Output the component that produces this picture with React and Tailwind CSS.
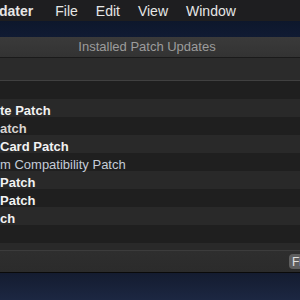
export default function App() {
  const rows = [
    { text: '', cls: '' },
    { text: 'te Patch', cls: 'font-bold text-[#f2f2f2]' },
    { text: 'atch', cls: 'font-bold text-[#d8d4d0]' },
    { text: 'Card Patch', cls: 'font-bold text-[#f2f2f2]' },
    { text: 'm Compatibility Patch', cls: 'font-normal text-[#c4ccd8]' },
    { text: 'Patch', cls: 'font-bold text-[#f2f2f2]' },
    { text: 'Patch', cls: 'font-bold text-[#f2f2f2]' },
    { text: 'ch', cls: 'font-bold text-[#f2f2f2]' },
    { text: '', cls: '' },
    { text: '', cls: '' },
  ];

  return (
    <div className="w-[300px] h-[300px] overflow-hidden bg-[#0e1830] font-['Liberation_Sans',Arial,sans-serif] select-none">
      {/* menu bar */}
      <div className="h-[21px] bg-[#1e1e20] flex items-center text-[14px] text-[#e6e6e6] gap-[18px] leading-none pt-[1px]">
        <span className="font-bold -ml-[1px]">dater</span>
        <span className="ml-[4px]">File</span>
        <span>Edit</span>
        <span>View</span>
        <span>Window</span>
      </div>

      {/* desktop strip */}
      <div className="h-[16px] bg-gradient-to-b from-[#0d172c] to-[#101b33]" />

      {/* window */}
      <div className="flex flex-col">
        <div className="h-[21px] bg-gradient-to-b from-[#3a3a3a] to-[#333333] border-b border-[#1a1a1a] flex items-center justify-center text-[13px] text-[#9c9c9c] pr-[6px]">
          Installed Patch Updates
        </div>
        <div className="h-[23px] bg-[#2b2b2b] border-b border-[#404040]" />
        <div className="h-[169px] overflow-hidden bg-[#1f1f1f]">
          {rows.map((r, i) => (
            <div
              key={i}
              className={`h-[18px] flex items-center pt-[4px] text-[13px] leading-none ${i % 2 === 0 ? 'bg-[#1f1f1f]' : 'bg-[#292929]'} ${r.cls}`}
            >
              {r.text}
            </div>
          ))}
        </div>
        <div className="h-[22px] bg-gradient-to-b from-[#2e2e2e] to-[#2b2b2b] border-t border-[#3c3c3c] flex items-center justify-end">
          <button className="h-[15px] w-[40px] -mr-[29px] rounded-[4px] bg-[#5e5e5e] text-[12px] text-[#e0e0e0] text-left pl-[3px] leading-none">
            Fix
          </button>
        </div>
        <div className="h-[1px] bg-[#0a0a0a]" />
      </div>

      {/* desktop bottom */}
      <div className="h-[27px] bg-gradient-to-b from-[#141c30] to-[#1c2742]" />
    </div>
  );
}
